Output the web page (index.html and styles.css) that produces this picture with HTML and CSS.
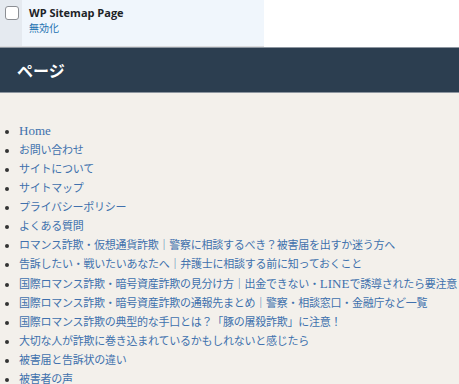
FILE: index.html
```html
<!DOCTYPE html>
<html lang="ja">
<head>
<meta charset="utf-8">
<link rel="stylesheet" href="styles.css">
</head>
<body>
<div class="top">
  <div class="plugin-row">
    <div class="check-col"><span class="checkbox"></span></div>
    <div class="info">
      <div class="title">WP Sitemap Page</div>
      <a class="action" href="#">無効化</a>
    </div>
  </div>
</div>
<div class="header"><h2>ページ</h2></div>
<div class="content">
  <ul class="pages">
    <li><a href="#"><span class="latin">Home</span></a></li>
    <li><a href="#">お問い合わせ</a></li>
    <li><a href="#">サイトについて</a></li>
    <li><a href="#">サイトマップ</a></li>
    <li><a href="#">プライバシーポリシー</a></li>
    <li><a href="#">よくある質問</a></li>
    <li><a href="#">ロマンス詐欺・仮想通貨詐欺｜警察に相談するべき？被害届を出すか迷う方へ</a></li>
    <li><a href="#">告訴したい・戦いたいあなたへ｜弁護士に相談する前に知っておくこと</a></li>
    <li><a href="#">国際ロマンス詐欺・暗号資産詐欺の見分け方｜出金できない・<span class="latin">LINE</span>で誘導されたら要注意</a></li>
    <li><a href="#">国際ロマンス詐欺・暗号資産詐欺の通報先まとめ｜警察・相談窓口・金融庁など一覧</a></li>
    <li><a href="#">国際ロマンス詐欺の典型的な手口とは？「豚の屠殺詐欺」に注意！</a></li>
    <li><a href="#">大切な人が詐欺に巻き込まれているかもしれないと感じたら</a></li>
    <li><a href="#">被害届と告訴状の違い</a></li>
    <li><a href="#">被害者の声</a></li>
  </ul>
</div>
</body>
</html>
```
FILE: styles.css
```css
html, body {
  margin: 0;
  padding: 0;
  background: #f3f0eb;
}
.top {
  background: #fff;
  height: 47px;
}
.plugin-row {
  display: flex;
  width: 264px;
  height: 46px;
  background: #f0f6fc;
  border-bottom: 1px solid #dcdcde;
}
.check-col {
  width: 22px;
  background: #e5eaf0;
  padding-top: 6px;
  box-sizing: border-box;
  display: flex;
  justify-content: center;
}
.checkbox {
  display: block;
  width: 12px;
  height: 12px;
  border: 1px solid #8c8f94;
  border-radius: 3px;
  background: #fff;
  margin-left: 2px;
}
.info {
  padding: 5px 0 0 7px;
  font-family: "Open Sans", "Noto Sans CJK JP", sans-serif;
}
.title {
  font-size: 11px;
  font-weight: 700;
  color: #1d2327;
  line-height: 15px;
}
.action {
  display: block;
  margin-top: 2px;
  font-size: 10px;
  line-height: 13px;
  color: #2271b1;
  text-decoration: none;
}
.header {
  background: #2c3e50;
  border-top: 1px solid #8d96a0;
  border-bottom: 1px solid #8d96a0;
  height: 44px;
  display: flex;
  align-items: center;
  padding-left: 17px;
}
.header h2 {
  margin: 0;
  color: #fff;
  font-family: "Noto Sans CJK JP", sans-serif;
  font-size: 16px;
  font-weight: 700;
}
.content {
  padding-top: 28px;
}
.pages {
  margin: 0;
  padding-left: 19px;
  font-family: "Liberation Serif", "Noto Sans CJK JP", serif;
  font-size: 11px;
  line-height: 19px;
  color: #333;
}
.pages li {
  white-space: nowrap;
  letter-spacing: -0.25px;
}
.pages li::marker {
  font-size: 12px;
}
.pages a {
  color: #4070ad;
  text-decoration: none;
}
.latin {
  font-size: 13px;
  letter-spacing: 0;
}
```
